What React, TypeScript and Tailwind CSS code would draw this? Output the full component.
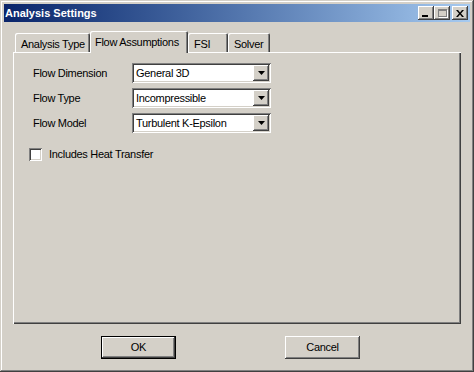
const FONT = "font-['Liberation_Sans',Arial,sans-serif]";

const RAISED =
  "shadow-[inset_-1px_-1px_#404040,inset_1px_1px_#fff,inset_-2px_-2px_#808080,inset_2px_2px_#d4d0c8]";
const SUNKEN =
  "shadow-[inset_1px_1px_#808080,inset_-1px_-1px_#fff,inset_2px_2px_#404040,inset_-2px_-2px_#d4d0c8]";

function TitleButton({ children, className = "" }: { children: React.ReactNode; className?: string }) {
  return (
    <div className={`w-[16px] h-[14px] bg-[#d4d0c8] ${RAISED} flex items-center justify-center ${className}`}>
      {children}
    </div>
  );
}

function Combo({ value }: { value: string }) {
  return (
    <div className={`w-[139px] h-[20px] bg-white ${SUNKEN} flex items-center p-[2px]`}>
      <span className="flex-1 pl-[2px] text-[11px] text-black leading-none truncate">{value}</span>
      <div className={`w-[16px] h-[16px] bg-[#d4d0c8] ${RAISED} flex items-center justify-center`}>
        <svg width="7" height="4" viewBox="0 0 7 4">
          <path d="M0 0h7L3.5 4z" fill="#000" />
        </svg>
      </div>
    </div>
  );
}

const TABS = ["Analysis Type", "Flow Assumptions", "FSI", "Solver"];
const TAB_W = [75, 98, 40, 42];

const ROWS = [
  { label: "Flow Dimension", value: "General 3D" },
  { label: "Flow Type", value: "Incompressible" },
  { label: "Flow Model", value: "Turbulent K-Epsilon" },
];

export default function App() {
  return (
    <div
      className={`${FONT} w-[474px] h-[372px] bg-[#d4d0c8] p-[4px] flex flex-col text-black shadow-[inset_-1px_-1px_#404040,inset_1px_1px_#d4d0c8,inset_-2px_-2px_#808080,inset_2px_2px_#fff]`}
    >
      {/* Title bar */}
      <div className="h-[18px] bg-linear-to-r from-[#0a246a] to-[#a6caf0] flex items-center pl-[1px] pr-[2px]">
        <span className="flex-1 text-white font-bold text-[11px] leading-none">Analysis Settings</span>
        <TitleButton>
          <div className="w-[6px] h-[2px] bg-black mt-[6px] -ml-[2px]" />
        </TitleButton>
        <TitleButton>
          <div className="w-[9px] h-[8px] border border-[#808080] border-t-2 shadow-[1px_1px_#fff]" />
        </TitleButton>
        <TitleButton className="ml-[2px]">
          <svg width="8" height="7" viewBox="0 0 8 7">
            <path d="M0 0h2l2 2.5L6 0h2L5 3.5 8 7H6L4 4.5 2 7H0l3-3.5z" fill="#000" />
          </svg>
        </TitleButton>
      </div>

      {/* Tabs + panel */}
      <div className="px-[9px] flex flex-col tracking-[-0.3px]">
        <div className="mt-[9px] h-[22px] -mb-[1px] flex items-end pl-[2px] relative z-10">
          {TABS.map((t, i) => {
            const active = i === 1;
            return (
              <div
                key={t}
                style={{ width: TAB_W[i] }}
                className={
                  active
                    ? "h-[22px] bg-[#d4d0c8] rounded-t-[2px] shadow-[inset_1px_1px_#fff,inset_-1px_0_#404040,inset_-2px_0_#808080] flex items-start pt-[5px] pl-[5px] text-[11px] leading-[13px] whitespace-nowrap"
                    : "h-[19px] mb-[1px] bg-[#d4d0c8] rounded-t-[2px] shadow-[inset_1px_1px_#fff,inset_-1px_0_#404040,inset_-2px_0_#808080] flex items-start pt-[5px] pl-[6px] text-[11px] leading-[13px] whitespace-nowrap"
                }
              >
                {t}
              </div>
            );
          })}
        </div>
        <div className="h-[272px] shadow-[inset_1px_1px_#fff,inset_-1px_-1px_#404040,inset_-2px_-2px_#808080] pt-[11px] pl-[20px]">
          <div className="flex flex-col gap-[5px]">
            {ROWS.map((r) => (
              <div key={r.label} className="flex items-center">
                <span className="w-[99px] text-[11px] leading-none">{r.label}</span>
                <Combo value={r.value} />
              </div>
            ))}
          </div>
          <div className="flex items-center mt-[15px] -ml-[4px]">
            <div className={`w-[13px] h-[13px] bg-white ${SUNKEN}`} />
            <span className="ml-[7px] text-[11px] leading-none">Includes Heat Transfer</span>
          </div>
        </div>
      </div>

      {/* Buttons */}
      <div className="mt-[12px] flex pl-[97px] gap-[109px] tracking-[-0.3px]">
        <div className="w-[75px] h-[23px] border border-black bg-[#d4d0c8] flex">
          <div className={`flex-1 ${RAISED} flex items-center justify-center text-[11px]`}>OK</div>
        </div>
        <div className={`w-[75px] h-[23px] bg-[#d4d0c8] ${RAISED} flex items-center justify-center text-[11px]`}>
          Cancel
        </div>
      </div>
    </div>
  );
}
